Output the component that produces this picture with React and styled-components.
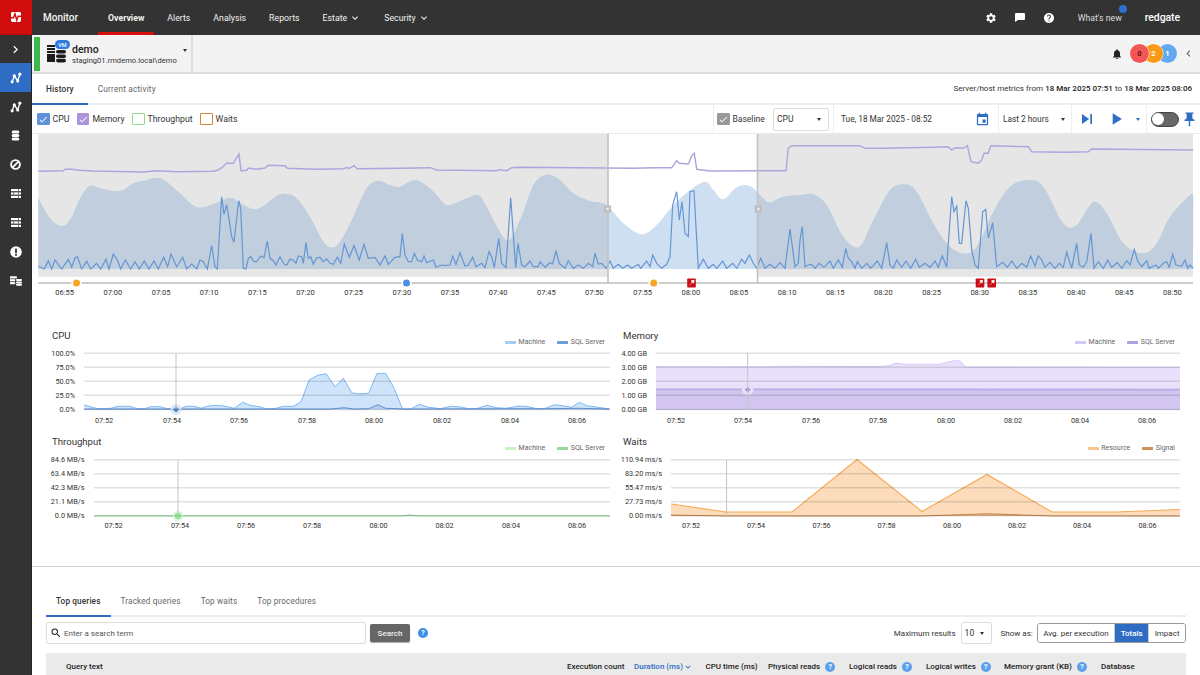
import React from "react";
import styled, { createGlobalStyle } from "styled-components";
import {
  MdSettings, MdHelp, MdNotifications, MdPushPin, MdPlayArrow, MdSkipNext,
  MdEvent, MdKeyboardArrowDown, MdChevronRight, MdChevronLeft, MdSearch, MdCheck,
} from "react-icons/md";

const Global = createGlobalStyle`
  html, body { margin: 0; padding: 0; height: 675px; overflow: hidden; background: #fff; }
  body { font-family: Roboto, "Liberation Sans", sans-serif; color: #333; }
  * { box-sizing: border-box; }
`;

/* ---------- data helpers ---------- */
const z = (off, pts, sx = 3, sy = 3, oy = 130) => pts.map(([x, y]) => [off + x / sx, oy + y / sy]);
const linePath = (pts) => "M" + pts.map(([x, y]) => `${x.toFixed(1)} ${y.toFixed(1)}`).join("L");
const smoothPath = (p) => {
  let d = `M${p[0][0].toFixed(1)} ${p[0][1].toFixed(1)}`;
  for (let i = 0; i < p.length - 1; i++) {
    const a = p[Math.max(i - 1, 0)], b = p[i], c = p[i + 1], e = p[Math.min(i + 2, p.length - 1)];
    const c1 = [b[0] + (c[0] - a[0]) / 6, b[1] + (c[1] - a[1]) / 6];
    const c2 = [c[0] - (e[0] - b[0]) / 6, c[1] - (e[1] - b[1]) / 6];
    d += `C${c1[0].toFixed(1)} ${c1[1].toFixed(1)} ${c2[0].toFixed(1)} ${c2[1].toFixed(1)} ${c[0].toFixed(1)} ${c[1].toFixed(1)}`;
  }
  return d;
};

const areaPts = [
  ...z(0, [[115,203],[150,265],[183,288],[210,270],[240,205],[270,167],[300,175],[340,183],[370,180],[400,160],[440,150],[470,143],[500,155],[540,190],[590,231],[640,222],[690,203],[720,218],[760,237],[790,228],[830,197],[860,192],[890,205],[930,260],[970,335],[995,352],[1020,335],[1060,260],[1100,175],[1135,152],[1170,165]]),
  ...z(400, [[0,170],[45,150],[90,175],[130,218],[150,225],[200,205],[235,195],[260,230],[320,330],[360,270],[400,165],[440,134],[480,150],[520,190],[570,213],[620,225],[670,280],[725,313],[770,285],[830,215],[910,156],[940,180],[970,208],[1010,172],[1050,168],[1090,205],[1110,217],[1150,200]]),
  ...z(800, [[0,195],[40,193],[80,225],[130,320],[178,350],[220,270],[270,180],[315,163],[350,185],[400,280],[445,345],[490,370],[530,350],[580,245],[630,170],[685,150],[730,170],[790,280],[830,285],[880,216],[920,250],[970,340],[1030,370],[1070,340],[1110,260],[1170,195],[1180,200]]),
];
const areaD = smoothPath(areaPts) + "L1193 269L38.3 269Z";

const bluePts = [
  ...z(0, [[115,409],[133,417],[145,392],[155,417],[165,390],[185,417],[205,388],[215,412],[225,383],[232,380],[245,417],[260,394],[272,417],[290,400],[302,417],[318,387],[327,417],[340,372],[352,390],[362,417],[376,390],[392,417],[405,395],[418,417],[433,393],[447,417],[462,393],[475,417],[491,382],[503,410],[513,372],[530,410],[548,382],[560,417],[575,402],[590,417],[600,390],[610,395],[622,417],[635,347],[645,410],[652,417],[665,200],[672,253],[680,224],[695,320],[702,337],[716,212],[722,235],[730,415],[738,417],[745,385],[752,380],[762,395],[770,395],[782,378],[792,383],[802,333],[810,385],[820,392],[828,405],[840,380],[852,402],[860,405],[870,388],[880,390],[888,400],[895,378],[905,380],[910,400],[918,338],[925,385],[932,380],[940,403],[950,383],[960,382],[970,395],[980,387],[990,400],[1000,403],[1012,382],[1022,400],[1033,342],[1048,382],[1062,347],[1078,390],[1092,343],[1105,385],[1125,382],[1140,405],[1155,378],[1165,403],[1185,382]]),
  ...z(400, [[0,380],[7,310],[15,375],[25,395],[35,395],[43,370],[52,390],[65,395],[72,378],[80,398],[100,390],[108,412],[125,405],[135,407],[150,405],[158,378],[168,403],[180,368],[195,408],[205,405],[218,382],[228,410],[245,400],[255,413],[267,365],[275,380],[283,413],[296,325],[305,400],[318,413],[332,203],[347,413],[354,340],[365,405],[375,410],[390,393],[400,410],[415,410],[420,395],[435,412],[450,398],[458,402],[468,362],[478,400],[495,415],[505,392],[520,415],[535,405],[550,415],[565,400],[578,410],[585,370],[595,402],[605,400],[618,415],[630,393],[640,415],[655,403],[668,415],[683,405],[695,415],[715,403],[722,415],[740,393],[750,410],[758,375],[770,400],[785,415],[800,403],[810,380],[818,225],[830,185],[838,270],[846,215],[855,310],[865,320],[870,185],[882,182],[895,415],[910,388],[925,415],[940,403],[950,415],[968,393],[980,415],[998,400],[1010,415],[1025,388],[1035,400],[1048,375],[1060,400],[1070,415],[1082,385],[1095,415],[1110,403],[1125,415],[1140,398],[1155,415],[1170,297],[1185,410]]),
  ...z(800, [[-5,400],[0,330],[7,290],[15,410],[25,405],[35,403],[45,415],[57,400],[72,412],[90,393],[100,415],[115,390],[127,412],[137,355],[145,385],[155,395],[165,415],[172,395],[185,415],[200,400],[212,415],[232,393],[245,415],[260,338],[270,405],[280,415],[290,390],[305,412],[318,393],[332,415],[347,388],[358,412],[375,400],[390,412],[405,393],[415,412],[427,377],[440,412],[445,340],[455,200],[462,245],[470,228],[478,340],[485,340],[498,212],[505,235],[515,360],[525,405],[535,415],[548,245],[557,238],[565,325],[578,278],[590,410],[608,397],[622,412],[635,393],[650,415],[665,400],[680,412],[692,378],[705,408],[715,377],[725,390],[735,412],[750,397],[765,415],[778,400],[790,412],[800,367],[815,415],[830,340],[838,405],[850,412],[860,395],[873,310],[882,415],[895,395],[910,415],[923,390],[935,412],[952,398],[965,415],[980,392],[990,405],[1003,358],[1013,393],[1025,410],[1040,392],[1047,415],[1068,405],[1075,415],[1090,400],[1100,395],[1108,412],[1118,373],[1128,405],[1145,408],[1155,390],[1163,415],[1170,405],[1180,415]]),
];
const purplePts = [
  ...z(0, [[115,124],[190,122],[195,118],[215,118],[240,121],[280,123],[430,126],[470,122],[530,125],[640,124],[655,120],[665,113],[680,100],[700,100],[717,72],[723,122],[740,121],[745,114],[770,118],[795,114],[805,106],[855,107],[862,115],[950,118],[1030,116],[1040,113],[1048,115],[1062,107],[1072,116]]),
  ...z(400, [[0,115],[90,113],[110,120],[290,122],[297,119],[320,122],[335,113],[360,112],[700,115],[760,113],[815,113],[830,92],[838,100],[865,102],[875,78],[883,70],[890,118],[930,123],[1158,122],[1165,55],[1175,47]]),
  ...z(800, [[0,47],[180,47],[195,55],[250,55],[400,52],[445,50],[455,60],[465,53],[490,55],[502,47],[513,95],[535,100],[545,90],[552,70],[565,70],[572,47],[685,50],[695,65],[800,67],[865,65],[875,57],[1180,60]]),
];
const overviewTicks = ["06:55","07:00","07:05","07:10","07:15","07:20","07:25","07:30","07:35","07:40","07:45","07:50","07:55","08:00","08:05","08:10","08:15","08:20","08:25","08:30","08:35","08:40","08:45","08:50"];

const TIMES = ["07:52","07:54","07:56","07:58","08:00","08:02","08:04","08:06"];
const ticksFrom = (xs) => xs.map((x, i) => [x, TIMES[i]]);

const cpuMachine = z(30, [[144,255],[180,266],[215,265],[235,259],[265,259],[285,266],[305,266],[320,260],[345,260],[365,266],[400,266],[415,259],[435,259],[455,265],[470,259],[495,256],[520,259],[543,265],[565,247],[585,256],[610,260],[630,267],[655,265],[672,259],[700,259],[720,246],[742,180],[765,166],[787,161],[811,200],[833,175],[855,218],[875,222],[900,220],[922,161],[945,160],[968,205],[990,267],[1012,267],[1035,253],[1060,262],[1090,266],[1120,259],[1145,261],[1170,267],[1190,265],[1215,256],[1240,263],[1265,265],[1300,258],[1325,260],[1350,267],[1370,265],[1395,254],[1425,259],[1440,262],[1460,247],[1480,257],[1510,262],[1540,267]], 2.658, 3, 320);
const cpuSql = z(30, [[144,267],[800,267],[835,263],[860,267],[900,266],[925,254],[945,265],[1000,267],[1380,266],[1460,265],[1540,267]], 2.658, 3, 320);
const memMachine = [[656,366.7],[770,366.8],[780,366.3],[880,366.6],[890,365.6],[894,363.6],[899,363.4],[904,364.3],[940,364.3],[948,362],[955,360.6],[960,361],[966,367],[1180,367.3]];
const memSql = [[656,389.3],[1180,389.6]];
const wResource = [[671,504],[726,512],[792,512],[857,459.5],[922,511.5],[987,474.5],[1052,512],[1116,512],[1180,509.5]];
const wSignal = [[671,515],[726,516],[922,516],[987,513.8],[1052,516],[1180,516]];
const tpMachine = [[94,515.6],[610,515.6]];
const tpSql = [[94,516],[400,516],[410,515.2],[420,516],[610,516]];

/* ---------- layout ---------- */
const Page = styled.div`
  width: 1200px; height: 675px; overflow: hidden; display: flex; flex-direction: column;
`;
const TopBar = styled.header`
  height: 35px; background: #333; display: flex; align-items: center; color: #fff; flex: none;
`;
const LogoBox = styled.div`
  width: 32px; height: 35px; background: #d00c0c; display: flex; align-items: center; justify-content: center;
  border-bottom: 1px solid #b00;
`;
const Brand = styled.div`
  font-size: 10px; font-weight: 500; margin-left: 11px; width: 55px; color: #f4f4f4;
`;
const Nav = styled.nav`
  display: flex; gap: 3px; height: 100%;
`;
const NavItem = styled.div`
  display: flex; align-items: center; gap: 2px; padding: 0 10px; font-size: 8.75px; height: 100%;
  font-weight: ${(p) => (p.$active ? 700 : 400)};
  color: #f1f1f1;
  border-bottom: 3px solid ${(p) => (p.$active ? "#d80e0e" : "transparent")};
  padding-top: 3px;
`;
const TopRight = styled.div`
  margin-left: auto; display: flex; align-items: center; padding-right: 20px; color: #fff;
`;
const TopIcon = styled.span`
  display: flex; width: 29px; justify-content: center; font-size: 11px;
`;
const WhatsNew = styled.span`
  position: relative; font-size: 8.75px; color: #dcdcdc; margin-left: 14px; margin-right: 23px;
`;
const NewDot = styled.i`
  position: absolute; right: -5px; top: -8px; width: 8px; height: 8px; border-radius: 50%; background: #2f6fd0;
`;
const RedgateMark = styled.span`
  font-size: 10.5px; font-weight: 500; letter-spacing: -0.1px; color: #fff;
`;
const Body = styled.div`
  flex: 1; display: flex; min-height: 0;
`;
const Sidebar = styled.aside`
  width: 32px; background: #333; flex: none; border-right: 1px solid #222; color: #fff;
`;
const SideItem = styled.div`
  height: ${(p) => (p.$short ? 28 : 29)}px; display: flex; align-items: center; justify-content: center;
  background: ${(p) => (p.$active ? "#2f6cc4" : "transparent")};
`;
const Main = styled.main`
  flex: 1; min-width: 0; display: flex; flex-direction: column;
`;
const ContextBar = styled.div`
  height: 39px; background: #f3f3f3; border-bottom: 2px solid #dcdcdc; display: flex; align-items: stretch; flex: none;
`;
const StatusStrip = styled.div`
  width: 6px; margin: 2px 0 1px 2px; background: #3eb649; flex: none;
`;
const ServerCard = styled.div`
  width: 153px; flex: none; display: flex; align-items: center; border-right: 2px solid #dcdcdc; padding-left: 7px; position: relative;
  svg { flex: none; }
`;
const VmBadge = styled.span`
  position: absolute; left: 15px; top: 5px; width: 15px; height: 9px; border-radius: 5px; background: #2c7be0;
  color: #fff; font-size: 5.5px; font-weight: 500; display: flex; align-items: center; justify-content: center;
`;
const ServerText = styled.div`
  margin: 3px 0 0 6px; display: flex; flex-direction: column; flex: none;
`;
const ServerName = styled.div`
  font-size: 10.5px; font-weight: 500; color: #222; line-height: 12px;
`;
const ServerPath = styled.div`
  font-size: 7.6px; color: #333; line-height: 10px;
`;
const Caret = styled.i`
  width: 0; height: 0; border-left: 2.5px solid transparent; border-right: 2.5px solid transparent;
  border-top: 3px solid ${(p) => p.$color || "#333"}; display: inline-block;
`;
const ServerCaret = styled.span`
  margin-left: 6px; margin-top: -6px; display: flex;
`;
const ContextRight = styled.div`
  margin-left: auto; display: flex; align-items: center; padding-right: 5px;
`;
const Alarms = styled.div`
  display: flex; margin: 0 5px 0 12px;
`;
const Alarm = styled.span`
  position: relative; z-index: ${(p) => p.$z};
  width: 19px; height: 19px; border-radius: 50%; background: ${(p) => p.$bg}; color: ${(p) => p.$fg};
  font-size: 7.5px; font-weight: 700; display: flex; align-items: center; justify-content: center;
  margin-left: -5px;
  box-shadow: 0 0 0 0.5px #fff;
`;
const TabsRow = styled.div`
  height: 31px; display: flex; align-items: stretch; border-bottom: 2px solid #eee; flex: none; position: relative; background: #fff;
`;
const Tab = styled.div`
  display: flex; align-items: center; padding: 0 14px; font-size: 8.2px; letter-spacing: 0.2px;
  font-weight: ${(p) => (p.$active ? 500 : 400)};
  color: ${(p) => (p.$active ? "#333" : "#666")};
  box-shadow: ${(p) => (p.$active ? "0 2px 0 #2f6cc4" : "none")};
  margin-left: ${(p) => (p.$ml ? p.$ml : "0")};
`;
const MetricsRange = styled.div`
  margin-left: auto; padding-right: 8px; display: flex; align-items: center; font-size: 8px; color: #333; gap: 2.2px;
  b { font-weight: 500; color: #222; }
`;
const Toolbar = styled.div`
  height: 29px; display: flex; align-items: stretch; border-bottom: 1px solid #e9e9e9; flex: none;
`;
const Checks = styled.div`
  display: flex; align-items: center; gap: 7.5px; padding-left: 5px; flex: 1;
`;
const Check = styled.label`
  display: flex; align-items: center; gap: 3px; font-size: 8.75px; color: #333;
`;
const BaselineCheck = styled(Check)`
  font-size: 8.5px;
`;
const Box = styled.span`
  width: 12.5px; height: 12.5px; border: 1.2px solid ${(p) => p.$color}; border-radius: 1px;
  background: ${(p) => (p.$on ? p.$fill : "#fff")}; color: #fff;
  display: flex; align-items: center; justify-content: center; font-size: 11px;
`;
const ToolGroup = styled.div`
  width: ${(p) => p.$w}px; border-left: 1.5px solid #ebeff4; display: flex; align-items: center;
  padding: ${(p) => p.$pad || "0 4px 0 3px"}; font-size: 8.3px; color: #333; position: relative; flex: none;
`;
const Select = styled.div`
  height: 23px; width: ${(p) => p.$w}px; border: 1px solid #ddd; border-radius: 2px; display: flex; align-items: center;
  justify-content: space-between; padding: 0 7px 0 3px; font-size: 8.5px; color: #333; background: #fff; flex: none;
`;
const Push = styled.span`
  margin-left: auto; display: flex;
`;
const PlayIcon = styled(MdPlayArrow)`
  margin-left: 9px;
`;
const Toggle = styled.span`
  width: 28px; height: 15px; border-radius: 8px; background: #666; border: 1.5px solid #444; position: relative; display: block; flex: none;
`;
const Knob = styled.i`
  position: absolute; left: 0; top: 0; width: 12px; height: 12px; border-radius: 50%; background: #fff; display: block;
`;
const Overview = styled.svg`
  display: block; width: 1168px; height: 166px; flex: none;
  text { font-family: Roboto, sans-serif; font-size: 7.5px; fill: #333; text-anchor: middle; }
`;
const ChartGrid = styled.section`
  display: grid; grid-template-columns: 1fr 1fr; padding: 28px 0 26px; border-bottom: 1px solid #d4d4d4; flex: none;
`;
const Panel = styled.div`
  display: flex; flex-direction: column;
`;
const PanelHead = styled.div`
  height: 18px; display: flex; justify-content: space-between; align-items: flex-end;
  padding: 0 ${(p) => p.$pr}px 0 ${(p) => p.$pl}px;
`;
const PanelTitle = styled.div`
  font-size: 9.6px; line-height: 14px; color: #333; align-self: flex-start; margin-top: 1px;
`;
const Legend = styled.div`
  display: flex; gap: 12px; font-size: 7px; line-height: 10px; color: #666; margin-bottom: -1px;
`;
const LegendItem = styled.span`
  display: flex; align-items: center; gap: 2.5px;
`;
const Swatch = styled.i`
  width: 11px; height: 3px; background: ${(p) => p.$c}; display: block;
`;
const ChartSvg = styled.svg`
  display: block; width: 584px; height: 88px;
  text { font-family: Roboto, sans-serif; font-size: 7.3px; fill: #333; }
`;
const Lower = styled.section`
  flex: 1; padding: 0 14px; display: flex; flex-direction: column; min-height: 0; margin-top: 20px;
`;
const LowerTabs = styled.div`
  height: 30px; display: flex; align-items: stretch; border-bottom: 2px solid #eee; margin-right: 0; flex: none;
`;
const LowerTab = styled.div`
  display: flex; align-items: center; padding: 0 10px; font-size: 8.2px; letter-spacing: 0.15px;
  font-weight: ${(p) => (p.$active ? 500 : 400)};
  color: ${(p) => (p.$active ? "#333" : "#666")};
  box-shadow: ${(p) => (p.$active ? "0 2px 0 #2f6cc4" : "none")};
`;
const Filters = styled.div`
  height: 32px; display: flex; align-items: center; flex: none;
`;
const SearchBox = styled.div`
  width: 320px; height: 22px; border: 1px solid #ddd; border-radius: 2px; display: flex; align-items: center; gap: 2px;
  padding-left: 3px; font-size: 8px; color: #555;
`;
const SearchBtn = styled.div`
  width: 40px; height: 18px; background: #666; color: #f0f0f0; border-radius: 2px; margin-left: 4px; font-size: 8px; font-weight: 500;
  display: flex; align-items: center; justify-content: center; box-shadow: 0 1px 1px #aaa;
`;
const HelpDot = styled.span`
  display: inline-flex; width: ${(p) => p.$s || 10}px; height: ${(p) => p.$s || 10}px; border-radius: 50%;
  background: ${(p) => p.$bg || "#5aa0ea"}; color: #fff; font-size: ${(p) => (p.$s || 10) - 3}px; font-weight: 700;
  align-items: center; justify-content: center; margin-left: ${(p) => p.$ml || 0}px; flex: none;
`;
const FilterRight = styled.div`
  margin-left: auto; display: flex; align-items: center; font-size: 8px; color: #333;
`;
const SmallSelect = styled(Select)`
  width: 31px; height: 22px; margin: 0 9px 0 5px; padding: 0 7px 0 3px;
`;
const Segments = styled.div`
  display: flex; height: 20px; border: 1px solid #999; border-radius: 3px; margin-left: 4px; overflow: hidden;
`;
const Segment = styled.div`
  padding: 0 ${(p) => p.$px}px; display: flex; align-items: center; font-size: 8px;
  background: ${(p) => (p.$active ? "#2f6cc4" : "#fff")}; color: ${(p) => (p.$active ? "#fff" : "#333")};
  font-weight: ${(p) => (p.$active ? 500 : 400)};
  border-left: ${(p) => (p.$first ? "none" : "1px solid #ccc")};
`;
const TableHead = styled.div`
  height: 27px; background: #eaeaea; display: flex; align-items: center; padding-left: 20px; margin-top: 4px; flex: none;
  font-size: 8px; font-weight: 500; color: #222;
`;
const HeadCell = styled.div`
  width: ${(p) => (p.$w ? `${p.$w}px` : "auto")}; flex: ${(p) => (p.$w ? "none" : 1)}; display: flex; align-items: center;
  color: ${(p) => (p.$sorted ? "#2f6cc4" : "#222")}; white-space: nowrap;
`;

/* ---------- icons ---------- */
const LogoIcon = () => (
  <svg width="10" height="10" viewBox="0 0 14 14">
    <rect x="0" y="0" width="14" height="14" rx="2" fill="#fff" />
    <path d="M0 8h3.5l2-5.5 2.6 9L10 6h4" fill="none" stroke="#d00c0c" strokeWidth="2" />
  </svg>
);
const ZigIcon = () => (
  <svg width="12" height="12" viewBox="0 0 14 14" fill="#fff">
    <path d="M2.5 11.5L5 4.5l4 6 2.5-8" fill="none" stroke="#fff" strokeWidth="1.6" />
    <circle cx="2.5" cy="11.5" r="1.8" /><circle cx="5" cy="4.5" r="1.8" /><circle cx="9" cy="10.5" r="1.8" /><circle cx="11.5" cy="2.5" r="1.8" />
  </svg>
);
const DbIcon = () => (
  <svg width="9" height="11" viewBox="0 0 10 13" fill="#fff">
    <rect x="0.5" y="0.5" width="9" height="3.6" rx="1.8" />
    <rect x="0.5" y="4.7" width="9" height="3.6" rx="1.8" />
    <rect x="0.5" y="8.9" width="9" height="3.6" rx="1.8" />
  </svg>
);
const BanIcon = () => (
  <svg width="11" height="11" viewBox="0 0 13 13" fill="none" stroke="#fff" strokeWidth="2.2">
    <circle cx="6.5" cy="6.5" r="5.2" /><path d="M3 10L10 3" />
  </svg>
);
const ListIcon = () => (
  <svg width="10" height="9" viewBox="0 0 10 9" fill="#fff">
    <rect width="10" height="2.2" /><rect y="3.4" width="10" height="2.2" /><rect y="6.8" width="10" height="2.2" />
    <path d="M7.5 0v2.2M7.5 3.4v2.2M7.5 6.8V9M2.5 3.4v2.2" stroke="#444" strokeWidth="0.7" />
  </svg>
);
const AlertIcon = () => (
  <svg width="12" height="12" viewBox="0 0 13 13">
    <circle cx="6.5" cy="6.5" r="6.3" fill="#fff" /><rect x="5.5" y="2.6" width="2" height="5.4" rx="0.8" fill="#333" /><circle cx="6.5" cy="9.8" r="1.1" fill="#333" />
  </svg>
);
const DbListIcon = () => (
  <svg width="12" height="10" viewBox="0 0 14 11" fill="#fff">
    <rect width="8" height="2.5" /><rect y="3.4" width="6" height="2.5" /><rect y="6.8" width="6" height="2.5" />
    <rect x="7" y="3.2" width="7" height="2.4" rx="1.2" /><rect x="7" y="6" width="7" height="2.4" rx="1.2" /><rect x="7" y="8.7" width="7" height="2.3" rx="1.1" />
  </svg>
);
const ServerIcon = () => (
  <svg width="19" height="18" viewBox="0 0 19 18" fill="#1d1d1d">
    <rect x="0" y="0" width="8" height="2" /><rect x="0" y="3" width="8" height="2" /><rect x="0" y="6" width="8" height="2" />
    <rect x="0" y="9" width="8" height="8" />
    <rect x="9" y="5" width="10" height="3.6" rx="1.8" /><rect x="9" y="9.4" width="10" height="3.6" rx="1.8" /><rect x="9" y="13.8" width="10" height="3.6" rx="1.8" />
  </svg>
);
const ChatIcon = () => (
  <svg width="10" height="9" viewBox="0 0 10 9" fill="#fff"><path d="M1 0h8a1 1 0 011 1v5a1 1 0 01-1 1H3L0 9V1a1 1 0 011-1z" /></svg>
);

/* ---------- chart pieces ---------- */
const MiniChart = ({ x0, y0, gridX, gridY, labels, labelX, ticks, tickY, vline, children }) => (
  <ChartSvg viewBox={`${x0} ${y0} 584 88`}>
    {children}
    {gridY.map((y) => (
      <line key={y} x1={gridX[0]} x2={gridX[1]} y1={y} y2={y} stroke="#000" strokeOpacity="0.12" strokeWidth="1.4" />
    ))}
    {vline && <line x1={vline[0]} x2={vline[0]} y1={vline[1]} y2={vline[2]} stroke="#c4c4c4" strokeWidth="1" />}
    {labels.map((t, i) => (
      <text key={t} x={labelX} y={gridY[i] + 2.7} textAnchor="end">{t}</text>
    ))}
    {ticks.map(([x, t]) => (
      <text key={t} x={x} y={tickY} textAnchor="middle">{t}</text>
    ))}
  </ChartSvg>
);
const area = (pts, base) => linePath(pts) + `L${pts[pts.length - 1][0]} ${base}L${pts[0][0]} ${base}Z`;
const RedFlag = ({ x }) => (
  <g>
    <rect x={x - 4.3} y={278.4} width="8.6" height="9.2" rx="0.8" fill="#c90d14" />
    <path d={`M${x - 3} ${286.4}L${x + 0.3} ${282.6}L${x - 0.6} ${280.4}L${x + 3} ${279.8}L${x + 2.4} ${283.4}L${x + 1} ${282.6}Z`} fill="#fff" />
  </g>
);
const Dot = ({ x, c }) => (
  <g>
    <circle cx={x} cy="283" r="5.2" fill="#fff" />
    <circle cx={x} cy="283" r="3.5" fill={c} />
  </g>
);
const Handle = ({ x }) => (
  <g>
    <rect x={x - 3.5} y="205.5" width="7" height="7" fill="#bdbdbd" />
    <rect x={x - 1.3} y="207.7" width="2.6" height="2.6" fill="#e9e9e9" />
  </g>
);

const sideIcons = [<MdChevronRight key="a" size={15} />, <ZigIcon key="b" />, <ZigIcon key="c" />, <DbIcon key="d" />, <BanIcon key="e" />, <ListIcon key="f" />, <ListIcon key="g" />, <AlertIcon key="h" />, <DbListIcon key="i" />];

export default function App() {
  return (
    <Page>
      <Global />
      <TopBar>
        <LogoBox><LogoIcon /></LogoBox>
        <Brand>Monitor</Brand>
        <Nav>
          <NavItem $active>Overview</NavItem>
          <NavItem>Alerts</NavItem>
          <NavItem>Analysis</NavItem>
          <NavItem>Reports</NavItem>
          <NavItem>Estate <MdKeyboardArrowDown size={12} /></NavItem>
          <NavItem>Security <MdKeyboardArrowDown size={12} /></NavItem>
        </Nav>
        <TopRight>
          <TopIcon><MdSettings size={12} /></TopIcon>
          <TopIcon><ChatIcon /></TopIcon>
          <TopIcon><MdHelp size={12} /></TopIcon>
          <WhatsNew>What's new<NewDot /></WhatsNew>
          <RedgateMark>redgate</RedgateMark>
        </TopRight>
      </TopBar>
      <Body>
        <Sidebar>
          {sideIcons.map((icon, i) => (
            <SideItem key={i} $active={i === 1} $short={i === 0}>{icon}</SideItem>
          ))}
        </Sidebar>
        <Main>
          <ContextBar>
            <StatusStrip />
            <ServerCard>
              <ServerIcon />
              <VmBadge>VM</VmBadge>
              <ServerText>
                <ServerName>demo</ServerName>
                <ServerPath>staging01.rmdemo.local\demo</ServerPath>
              </ServerText>
              <ServerCaret><Caret /></ServerCaret>
            </ServerCard>
            <ContextRight>
              <MdNotifications size={12} color="#222" />
              <Alarms>
                <Alarm $z={3} $bg="#f45656" $fg="#5a1111">0</Alarm>
                <Alarm $z={2} $bg="#fa9a14" $fg="#fff">2</Alarm>
                <Alarm $z={1} $bg="#62a9f2" $fg="#fff">1</Alarm>
              </Alarms>
              <MdChevronLeft size={13} color="#666" />
            </ContextRight>
          </ContextBar>
          <TabsRow>
            <Tab $active>History</Tab>
            <Tab $ml="-4px">Current activity</Tab>
            <MetricsRange>
              Server/host metrics from <b>18 Mar 2025 07:51</b> to <b>18 Mar 2025 08:06</b>
            </MetricsRange>
          </TabsRow>
          <Toolbar>
            <Checks>
              <Check><Box $on $color="#5f92d8" $fill="#5f92d8"><MdCheck /></Box>CPU</Check>
              <Check><Box $on $color="#ab94dc" $fill="#ab94dc"><MdCheck /></Box>Memory</Check>
              <Check><Box $color="#8fdc8f" />Throughput</Check>
              <Check><Box $color="#d98334" />Waits</Check>
            </Checks>
            <ToolGroup $w={120}>
              <BaselineCheck><Box $on $color="#999" $fill="#999"><MdCheck /></Box>Baseline</BaselineCheck>
              <Push><Select $w={56}>CPU <Caret /></Select></Push>
            </ToolGroup>
            <ToolGroup $w={165} $pad="0 8px 0 7px">
              Tue, 18 Mar 2025 - 08:52
              <Push><MdEvent size={15} color="#2f6cc4" /></Push>
            </ToolGroup>
            <ToolGroup $w={73} $pad="0 6px 0 4px">
              Last 2 hours
              <Push><Caret /></Push>
            </ToolGroup>
            <ToolGroup $w={75} $pad="0 6px 0 5px">
              <MdSkipNext size={20} color="#2f6cc4" />
              <PlayIcon size={20} color="#2f6cc4" />
              <Push><Caret $color="#2f6cc4" /></Push>
            </ToolGroup>
            <ToolGroup $w={54} $pad="0 2px 0 4px">
              <Toggle><Knob /></Toggle>
              <Push><MdPushPin size={17} color="#2f6cc4" /></Push>
            </ToolGroup>
          </Toolbar>
          <Overview viewBox="32 134 1168 166">
            <rect x="38.3" y="134" width="1154.7" height="142.7" fill="#e6e6e6" />
            <path d={areaD} fill="#c0cede" />
            <rect x="608" y="134" width="149.5" height="149" fill="#fff" />
            <clipPath id="sel"><rect x="608" y="134" width="149.5" height="149" /></clipPath>
            <path d={areaD} fill="#cfdff2" clipPath="url(#sel)" />
            <path d={linePath(purplePts)} fill="none" stroke="#b3a2de" strokeWidth="1.4" />
            <path d={linePath(bluePts)} fill="none" stroke="#6496d3" strokeWidth="1.2" />
            <line x1="38.3" x2="1193" y1="283" y2="283" stroke="#bdbdbd" strokeWidth="1.4" />
            <line x1="608" x2="608" y1="134" y2="283" stroke="#c2c2c2" strokeWidth="1.6" />
            <line x1="757.5" x2="757.5" y1="134" y2="283" stroke="#c2c2c2" strokeWidth="1.6" />
            <Handle x={607.5} />
            <Handle x={758.3} />
            <Dot x={76.5} c="#f9a623" />
            <Dot x={406.5} c="#4a8fe8" />
            <Dot x={653.7} c="#f9a623" />
            <RedFlag x={691.5} />
            <RedFlag x={980} />
            <RedFlag x={991.7} />
            {overviewTicks.map((t, i) => (
              <text key={t} x={64.7 + i * 48.16} y="294.5">{t}</text>
            ))}
          </Overview>
          <ChartGrid>
            <Panel>
              <PanelHead $pl={20} $pr={11}>
                <PanelTitle>CPU</PanelTitle>
                <Legend>
                  <LegendItem><Swatch $c="#a6cbf5" />Machine</LegendItem>
                  <LegendItem><Swatch $c="#6d9edb" />SQL Server</LegendItem>
                </Legend>
              </PanelHead>
              <MiniChart x0={32} y0={346} gridX={[84, 610]} gridY={[353.3, 367.2, 381.3, 395.3, 409.5]}
                labels={["100.0%", "75.0%", "50.0%", "25.0%", "0.0%"]} labelX={75}
                ticks={ticksFrom([104, 172, 239, 307, 374, 442, 510, 577])} tickY={422.5} vline={[176, 353, 410]}>
                <path d={area(cpuMachine, 409.5)} fill="#cfe4fb" />
                <path d={linePath(cpuMachine)} fill="none" stroke="#7db8f6" strokeWidth="1" />
                <path d={area(cpuSql, 409.5)} fill="#a9c8ec" opacity="0.8" />
                <path d={linePath(cpuSql)} fill="none" stroke="#5f92d6" strokeWidth="1" />
                <circle cx="176" cy="409.5" r="5.5" fill="#dbe8f7" />
                <path d="M176 406.6L178.9 409.5 176 412.4 173.1 409.5Z" fill="#3f7fcf" />
              </MiniChart>
            </Panel>
            <Panel>
              <PanelHead $pl={7} $pr={25}>
                <PanelTitle>Memory</PanelTitle>
                <Legend>
                  <LegendItem><Swatch $c="#d6c8f6" />Machine</LegendItem>
                  <LegendItem><Swatch $c="#b3a0e4" />SQL Server</LegendItem>
                </Legend>
              </PanelHead>
              <MiniChart x0={616} y0={346} gridX={[656, 1180]} gridY={[353.3, 367.2, 381.3, 395.3, 409.5]}
                labels={["4.00 GB", "3.00 GB", "2.00 GB", "1.00 GB", "0.00 GB"]} labelX={647}
                ticks={ticksFrom([676, 743, 811, 878, 946, 1013, 1080, 1147])} tickY={422.5} vline={[747.7, 353, 410]}>
                <path d={area(memMachine, 410)} fill="#e9e1fb" />
                <path d={area(memSql, 410)} fill="#d2c5ef" />
                <path d={linePath(memMachine)} fill="none" stroke="#d6caf6" strokeWidth="1" />
                <path d={linePath(memSql)} fill="none" stroke="#bcabe8" strokeWidth="1.8" />
                <circle cx="747.7" cy="389.6" r="6" fill="#e6def8" />
                <path d="M747.7 386.2L751.1 389.6 747.7 393 744.3 389.6Z" fill="#a48fdc" stroke="#fff" strokeWidth="0.7" />
              </MiniChart>
            </Panel>
            <Panel>
              <PanelHead $pl={20} $pr={11}>
                <PanelTitle>Throughput</PanelTitle>
                <Legend>
                  <LegendItem><Swatch $c="#c6f2c6" />Machine</LegendItem>
                  <LegendItem><Swatch $c="#9ad79a" />SQL Server</LegendItem>
                </Legend>
              </PanelHead>
              <MiniChart x0={32} y0={452} gridX={[94, 610]} gridY={[459.7, 473.7, 487.7, 501.7, 515.7]}
                labels={["84.6 MB/s", "63.4 MB/s", "42.3 MB/s", "21.1 MB/s", "0.0 MB/s"]} labelX={84.5}
                ticks={ticksFrom([113.5, 180, 246, 312, 378.5, 444.5, 511, 577])} tickY={527.5} vline={[178, 460, 516]}>
                <path d={linePath(tpMachine)} fill="none" stroke="#c6f2c6" strokeWidth="1" />
                <path d={linePath(tpSql)} fill="none" stroke="#9ad79a" strokeWidth="1.2" />
                <circle cx="178" cy="516" r="5.5" fill="#e0f6e0" />
                <circle cx="178" cy="516" r="3.2" fill="#94ea94" />
              </MiniChart>
            </Panel>
            <Panel>
              <PanelHead $pl={7} $pr={25}>
                <PanelTitle>Waits</PanelTitle>
                <Legend>
                  <LegendItem><Swatch $c="#fac690" />Resource</LegendItem>
                  <LegendItem><Swatch $c="#cc935a" />Signal</LegendItem>
                </Legend>
              </PanelHead>
              <MiniChart x0={616} y0={452} gridX={[671, 1180]} gridY={[459.7, 473.7, 487.7, 501.7, 515.7]}
                labels={["110.94 ms/s", "83.20 ms/s", "55.47 ms/s", "27.73 ms/s", "0.00 ms/s"]} labelX={662}
                ticks={ticksFrom([691, 756, 821.5, 886.5, 952, 1017, 1082, 1147.5])} tickY={527.5} vline={[726.6, 460, 516]}>
                <path d={area(wResource, 516)} fill="#fcdcbb" />
                <path d={linePath(wResource)} fill="none" stroke="#f6a955" strokeWidth="1.1" />
                <path d={area(wSignal, 516)} fill="#e7b98a" />
                <path d={linePath(wSignal)} fill="none" stroke="#c8884e" strokeWidth="1.1" />
              </MiniChart>
            </Panel>
          </ChartGrid>
          <Lower>
            <LowerTabs>
              <LowerTab $active>Top queries</LowerTab>
              <LowerTab>Tracked queries</LowerTab>
              <LowerTab>Top waits</LowerTab>
              <LowerTab>Top procedures</LowerTab>
            </LowerTabs>
            <Filters>
              <SearchBox><MdSearch size={12} color="#222" />Enter a search term</SearchBox>
              <SearchBtn>Search</SearchBtn>
              <HelpDot $ml={8} $bg="#3b8fea">?</HelpDot>
              <FilterRight>
                Maximum results
                <SmallSelect>10 <Caret /></SmallSelect>
                Show as:
                <Segments>
                  <Segment $first $px={5.5}>Avg. per execution</Segment>
                  <Segment $active $px={5.5}>Totals</Segment>
                  <Segment $px={5.5}>Impact</Segment>
                </Segments>
              </FilterRight>
            </Filters>
            <TableHead>
              <HeadCell>Query text</HeadCell>
              <HeadCell $w={67}>Execution count</HeadCell>
              <HeadCell $w={71.5} $sorted>Duration (ms)<MdKeyboardArrowDown size={10} /></HeadCell>
              <HeadCell $w={62.5}>CPU time (ms)</HeadCell>
              <HeadCell $w={81}>Physical reads<HelpDot $ml={5}>?</HelpDot></HeadCell>
              <HeadCell $w={77}>Logical reads<HelpDot $ml={5}>?</HelpDot></HeadCell>
              <HeadCell $w={78}>Logical writes<HelpDot $ml={5}>?</HelpDot></HeadCell>
              <HeadCell $w={97}>Memory grant (KB)<HelpDot $ml={5}>?</HelpDot></HeadCell>
              <HeadCell $w={85}>Database</HeadCell>
            </TableHead>
          </Lower>
        </Main>
      </Body>
    </Page>
  );
}
